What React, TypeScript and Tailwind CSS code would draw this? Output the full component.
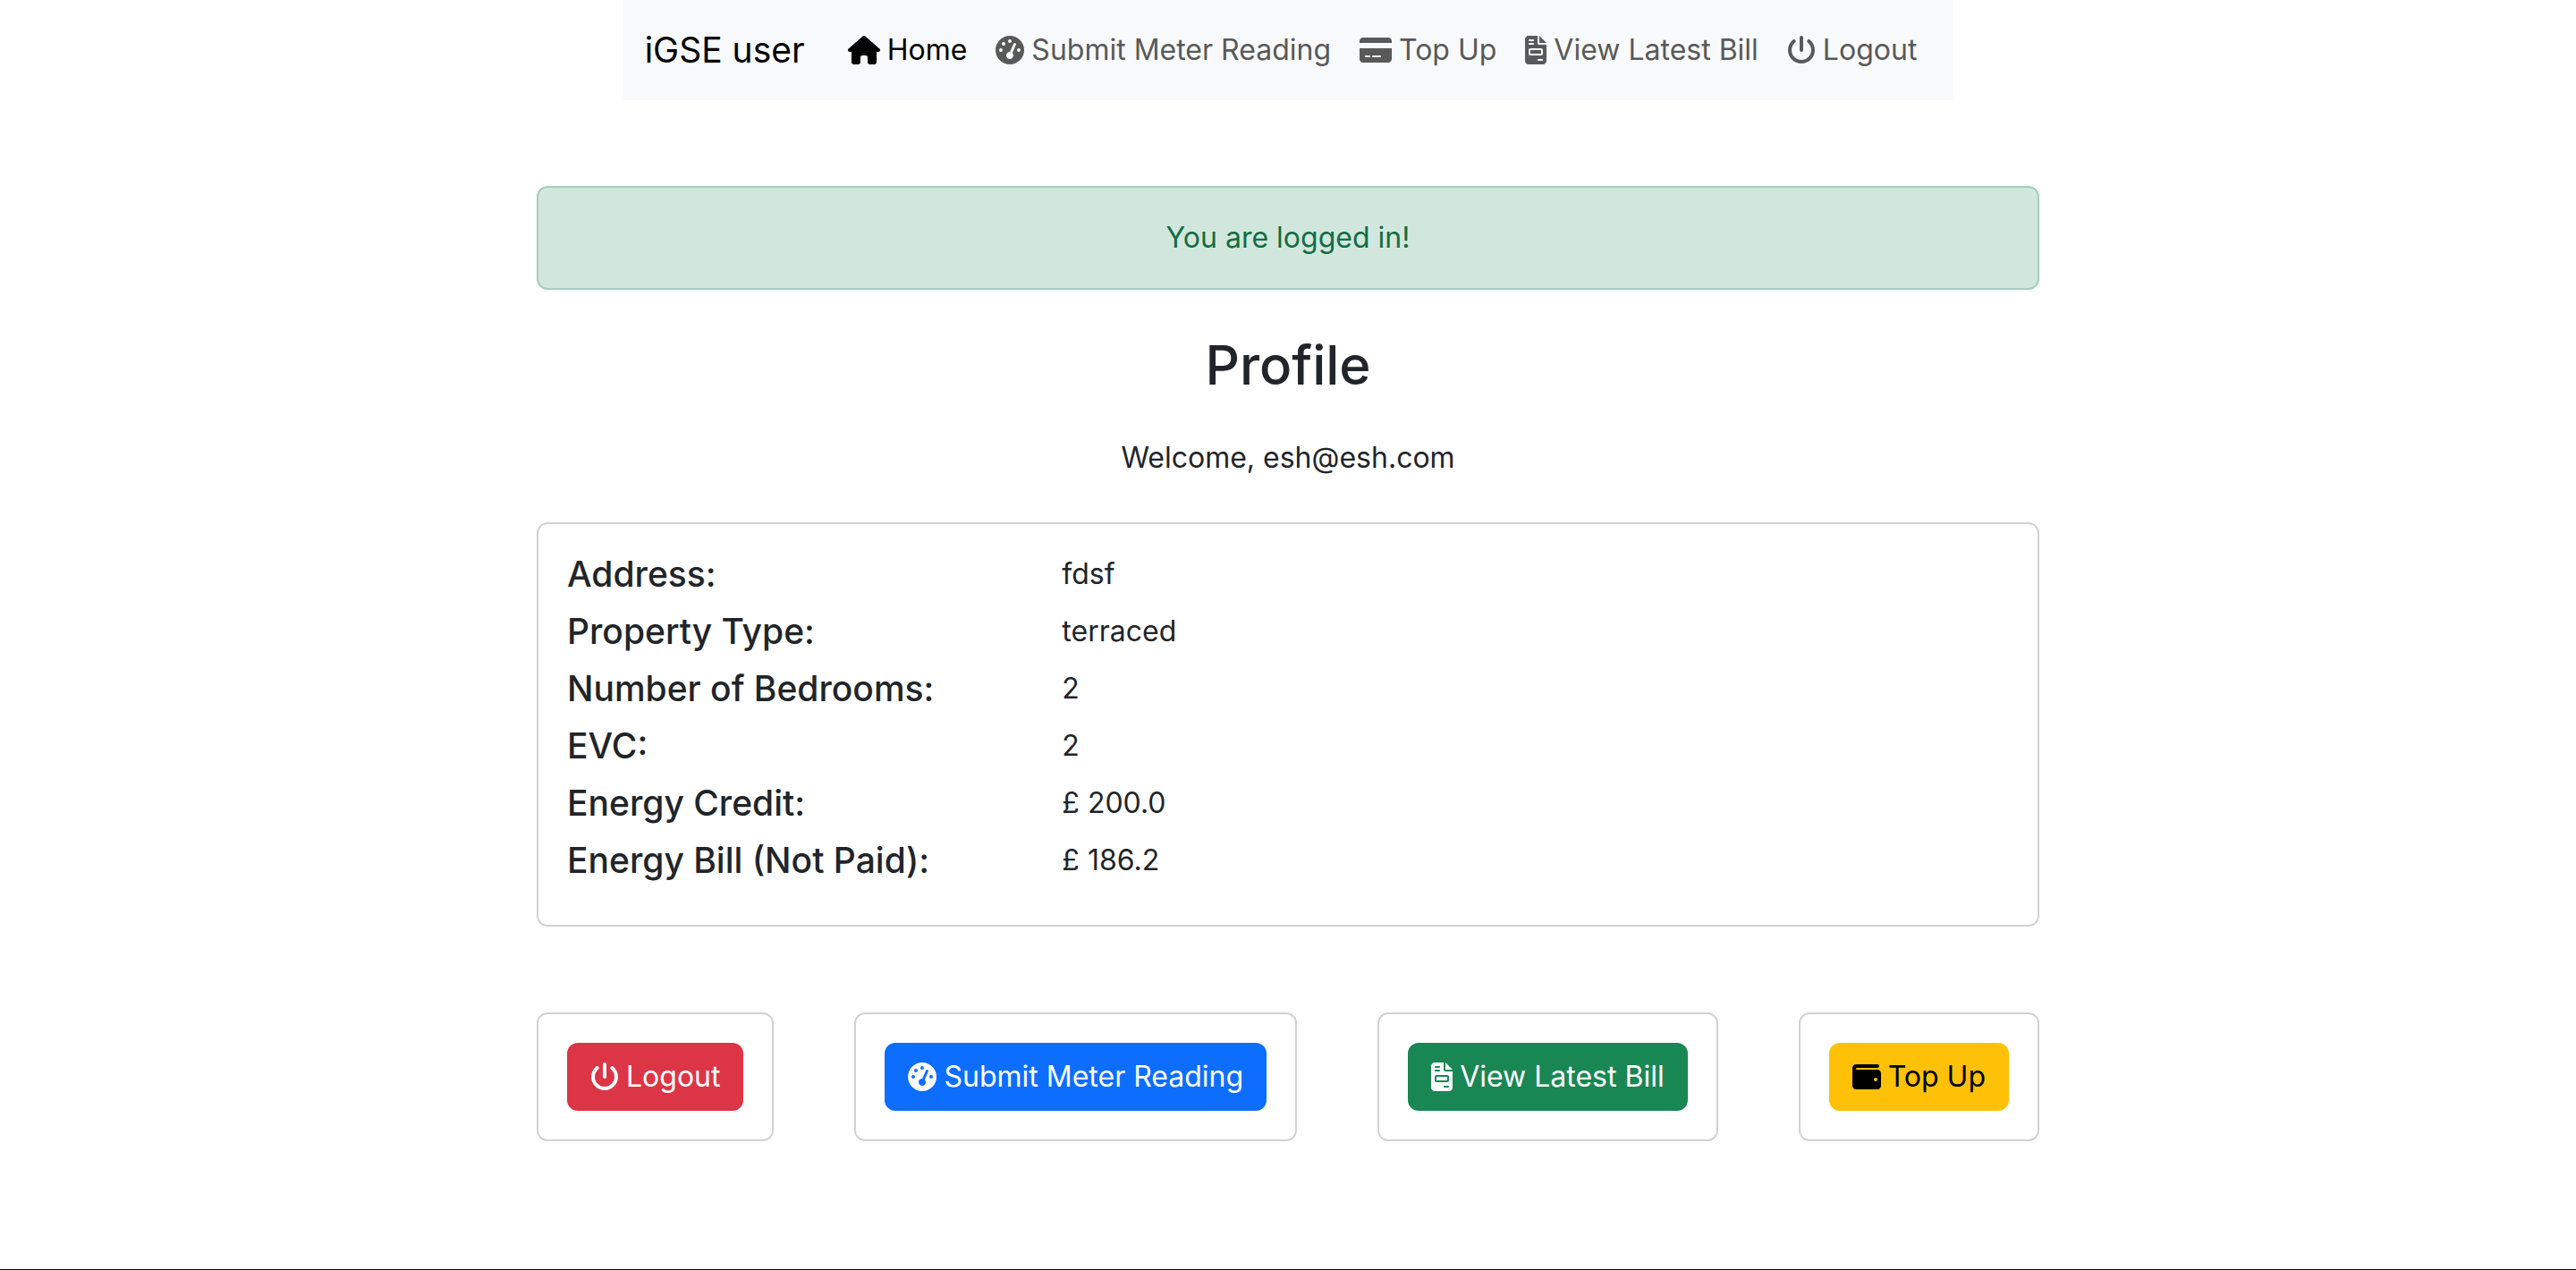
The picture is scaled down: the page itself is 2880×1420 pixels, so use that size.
import type { IconType } from "react-icons";
import {
  FaHouse,
  FaGaugeHigh,
  FaCreditCard,
  FaFileInvoice,
  FaPowerOff,
  FaWallet,
} from "react-icons/fa6";

type NavItem = { label: string; icon: IconType; iconWidth: string; active?: boolean };
type Detail = { label: string; value: string };
type Action = { label: string; icon: IconType; iconWidth: string; tone: string };

const navItems: NavItem[] = [
  { label: "Home", icon: FaHouse, iconWidth: "w-9", active: true },
  { label: "Submit Meter Reading", icon: FaGaugeHigh, iconWidth: "w-8" },
  { label: "Top Up", icon: FaCreditCard, iconWidth: "w-9" },
  { label: "View Latest Bill", icon: FaFileInvoice, iconWidth: "w-6" },
  { label: "Logout", icon: FaPowerOff, iconWidth: "w-8" },
];

const details: Detail[] = [
  { label: "Address:", value: "fdsf" },
  { label: "Property Type:", value: "terraced" },
  { label: "Number of Bedrooms:", value: "2" },
  { label: "EVC:", value: "2" },
  { label: "Energy Credit:", value: "£ 200.0" },
  { label: "Energy Bill (Not Paid):", value: "£ 186.2" },
];

const actions: Action[] = [
  { label: "Logout", icon: FaPowerOff, iconWidth: "w-8", tone: "bg-[#dc3545] text-white" },
  { label: "Submit Meter Reading", icon: FaGaugeHigh, iconWidth: "w-8", tone: "bg-[#0d6efd] text-white" },
  { label: "View Latest Bill", icon: FaFileInvoice, iconWidth: "w-6", tone: "bg-[#198754] text-white" },
  { label: "Top Up", icon: FaWallet, iconWidth: "w-8", tone: "bg-[#ffc107] text-black" },
];

function Navbar() {
  return (
    <nav className="mx-auto flex w-fit items-center bg-[#f8f9fa] px-6 py-4">
      <a href="#" className="mr-8 text-[39px] leading-[60px] text-black">
        iGSE user
      </a>
      <ul className="flex">
        {navItems.map(({ label, icon: Icon, iconWidth, active }) => (
          <li key={label}>
            <a
              href="#"
              className={`flex items-center gap-2 px-4 py-4 ${active ? "text-black" : "text-[#595959]"}`}
            >
              <Icon className={`h-8 shrink-0 ${iconWidth}`} aria-hidden="true" />
              {label}
            </a>
          </li>
        ))}
      </ul>
    </nav>
  );
}

function ProfileCard() {
  return (
    <dl className="mt-12 rounded-xl border-2 border-[#d2d2d2] px-8 pt-8 pb-8">
      {details.map(({ label, value }) => (
        <div key={label} className="mb-4 grid grid-cols-[1fr_2fr] items-center">
          <dt className="text-[39px] leading-[48px] font-medium">{label}</dt>
          <dd className="pl-4">{value}</dd>
        </div>
      ))}
    </dl>
  );
}

function ActionBar() {
  return (
    <div className="mt-24 flex justify-between">
      {actions.map(({ label, icon: Icon, iconWidth, tone }) => (
        <div key={label} className="rounded-xl border-2 border-[#d2d2d2] p-8">
          <button
            type="button"
            className={`flex items-center gap-2 rounded-xl px-[26px] py-[14px] ${tone}`}
          >
            <Icon className={`h-8 shrink-0 ${iconWidth}`} aria-hidden="true" />
            {label}
          </button>
        </div>
      ))}
    </div>
  );
}

export default function App() {
  return (
    <div className="min-h-screen border-b border-black bg-white font-['Inter',sans-serif] text-[32px] leading-[48px] text-[#212529]">
      <Navbar />
      <main className="mx-auto mt-24 w-full max-w-[1680px]">
        <div
          role="alert"
          className="rounded-xl border-2 border-[#a3cfbb] bg-[#d1e7dd] p-8 text-center text-[#146c43]"
        >
          You are logged in!
        </div>
        <h2 className="mt-11 text-center text-[60px] leading-[80px] font-medium">Profile</h2>
        <p className="mt-10 text-center">Welcome, esh@esh.com</p>
        <ProfileCard />
        <ActionBar />
      </main>
    </div>
  );
}
